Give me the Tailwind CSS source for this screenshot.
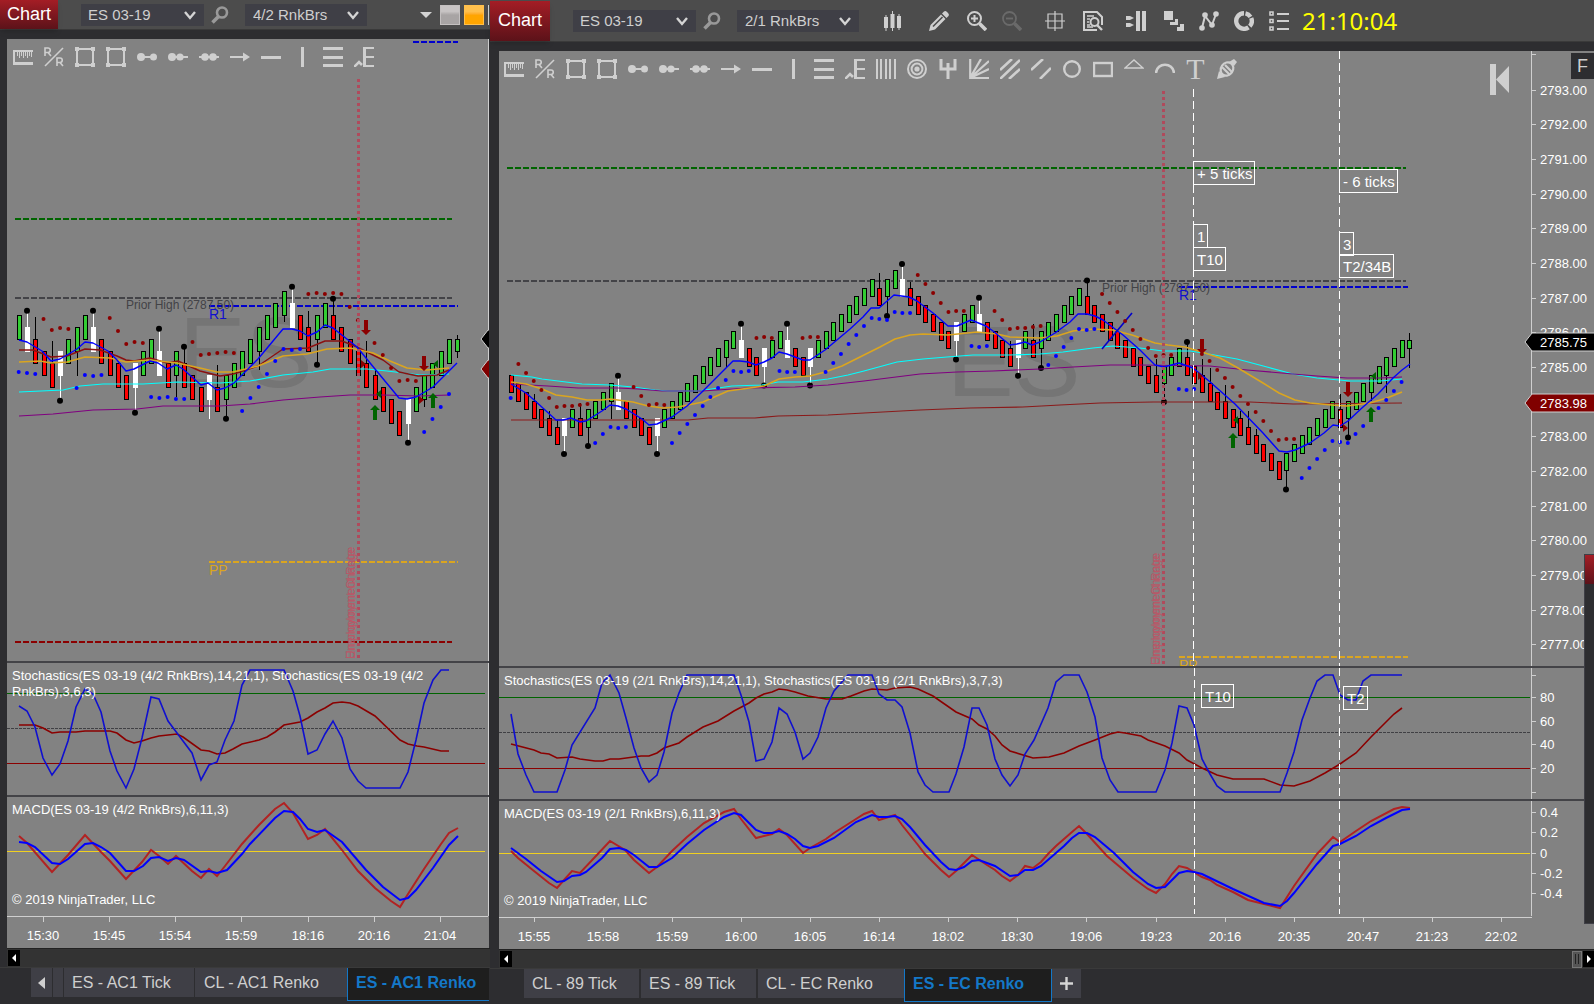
<!DOCTYPE html>
<html lang="en">
<head>
    <meta charset="UTF-8">
    <meta name="viewport" content="width=device-width, initial-scale=1.0">
    <title>ES 03-19 - Chart</title>
    <script src="https://cdn.jsdelivr.net/npm/@tailwindcss/browser@4"></script>
</head>
<body class="flex h-screen overflow-hidden bg-[#2d2d30] font-['Liberation_Sans',Arial,sans-serif] text-[13px] text-white">

    <!-- icon set -->
    <svg class="hidden" aria-hidden="true">
        <symbol id="chevron" viewBox="0 0 12 9"><path d="M1 1l5 6 5-6" fill="none" stroke="#d4d4d4" stroke-width="2.4"/></symbol>
        <symbol id="search" viewBox="0 0 18 18"><g fill="none" stroke="#999"><circle cx="11" cy="6.5" r="5" stroke-width="2.6"/><path d="M7.5 10.5L1.5 16.5" stroke-width="3.6"/></g></symbol>
        <symbol id="ruler" viewBox="0 0 20 20"><path d="M0 3h20v2H2v10h18v3H0z"/><path d="M4.500 5v4M6.500 5v6M8.500 5v4M10.500 5v6M12.500 5v4M14.500 5v6M16.500 5v4M18.500 5v5" stroke="#cfcfcf" stroke-width="1"/></symbol>
        <symbol id="risk" viewBox="0 0 20 20"><g fill="none" stroke="#cfcfcf" stroke-width="1.6"><path d="M1 19L19 1"/><path d="M1 9V1h3a2.2 2.2 0 0 1 0 4.500H1M4 5.500L7 9"/><path d="M13 19v-8h3a2.200 2.200 0 0 1 0 4.500h-3M16 15.500l3 3.500"/></g></symbol>
        <symbol id="region" viewBox="0 0 20 20"><rect x="2" y="2" width="16" height="16" fill="none" stroke="#cfcfcf" stroke-width="2"/><path d="M0 0h4v4H0zM16 0h4v4h-4zM0 16h4v4H0zM16 16h4v4h-4z"/></symbol>
        <symbol id="line" viewBox="0 0 20 20"><path d="M3 9h14v2H3z"/><circle cx="4" cy="10" r="4"/><circle cx="16.500" cy="10" r="3.500"/></symbol>
        <symbol id="ray" viewBox="0 0 20 20"><path d="M3 9h17v2H3z"/><circle cx="4" cy="10" r="4"/><circle cx="12" cy="10" r="3.600"/></symbol>
        <symbol id="extended" viewBox="0 0 20 20"><path d="M0 9h20v2H0z"/><circle cx="6" cy="10" r="3.800"/><circle cx="14" cy="10" r="3.800"/></symbol>
        <symbol id="arrow" viewBox="0 0 20 20"><path d="M0 9h13V5.500l7 4.500-7 4.500V11H0z"/></symbol>
        <symbol id="hline" viewBox="0 0 20 20"><path d="M0 9h20v3H0z"/></symbol>
        <symbol id="vline" viewBox="0 0 20 20"><path d="M9 0h3v20H9z"/></symbol>
        <symbol id="retrace" viewBox="0 0 20 20"><path d="M0 0h20v3H0zM0 9h20v3H0zM0 17h20v3H0z"/></symbol>
        <symbol id="fibext" viewBox="0 0 20 20"><path d="M9 0h11v2h-8v7h8v2h-8v7h8v2H9z"/><path d="M0 20l5-5 3 3" fill="none" stroke="#cfcfcf" stroke-width="2.600"/></symbol>
        <symbol id="timeext" viewBox="0 0 20 20"><path d="M0 0h2v20H0zM4 0h2v20H4zM9 0h2v20H9zM13 0h2v20h-2zM18 0h2v20h-2z"/></symbol>
        <symbol id="target" viewBox="0 0 20 20"><g fill="none" stroke="#cfcfcf" stroke-width="2"><circle cx="10" cy="10" r="9"/><circle cx="10" cy="10" r="5.400"/></g><circle cx="10" cy="10" r="2.600"/></symbol>
        <symbol id="fork" viewBox="0 0 20 20"><path d="M3 0v10h14V0M10 4v16" fill="none" stroke="#cfcfcf" stroke-width="3"/></symbol>
        <symbol id="fan" viewBox="0 0 20 20"><path d="M1.200 0v19H20M1 19L12 0M1 19L20 2M1 19L20 10" fill="none" stroke="#cfcfcf" stroke-width="2.200"/></symbol>
        <symbol id="channel" viewBox="0 0 20 20"><path d="M0 11L12 0M0 20L20 1M9 20l11-10" fill="none" stroke="#cfcfcf" stroke-width="2.600"/></symbol>
        <symbol id="regression" viewBox="0 0 20 20"><path d="M0 11L12 0M9 20L20 9" fill="none" stroke="#cfcfcf" stroke-width="2.600"/></symbol>
        <symbol id="ellipse" viewBox="0 0 20 20"><circle cx="10" cy="10" r="7.800" fill="none" stroke="#cfcfcf" stroke-width="2.400"/></symbol>
        <symbol id="rect" viewBox="0 0 20 20"><rect x="1" y="4" width="18" height="13" fill="none" stroke="#cfcfcf" stroke-width="2.400"/></symbol>
        <symbol id="triangle" viewBox="0 0 20 20"><path d="M1 9l9-8 9 8z" fill="none" stroke="#cfcfcf" stroke-width="1.400"/></symbol>
        <symbol id="arc" viewBox="0 0 20 20"><path d="M1 14c1-11 17-11 18 0" fill="none" stroke="#cfcfcf" stroke-width="2.600"/></symbol>
        <symbol id="marker" viewBox="0 0 20 20"><path d="M0 20l2-8 6 6z"/><path d="M12 3l5-3 3 3-3 4z"/><g fill="none" stroke="#cfcfcf" stroke-width="2.200"><ellipse cx="10" cy="10" rx="6" ry="7" transform="rotate(35 10 10)"/><path d="M5 8l8 8M8 6l7 7"/></g></symbol>
        <symbol id="bars" viewBox="0 0 20 20"><path d="M1 6h4v11H1zM7.500 3h4v14h-4zM14 5h4v12h-4zM2.500 4h1v16h-1zM9 0h1v20H9zM15.500 3h1v16h-1z"/></symbol>
        <symbol id="pencil" viewBox="0 0 20 20"><path d="M0 20l1.500-6L12 3.500l4.500 4.500L6 18.500zM13 2.500L15 .5q1.500-1 3 .5l1 1q1.500 1.500.5 3l-2 2z"/><path d="M4 15.500L13.500 6" stroke="#4c4c4c" stroke-width="1.600"/></symbol>
        <symbol id="zoomin" viewBox="0 0 20 20"><g fill="none" stroke="#cfcfcf" stroke-width="2"><circle cx="7.500" cy="7.500" r="6.500"/><path d="M7.500 4v7M4 7.500h7"/><path d="M12.500 12.500l6.500 6.500" stroke-width="3.600"/></g></symbol>
        <symbol id="zoomout" viewBox="0 0 20 20"><g fill="none" stroke="#6a6a6a" stroke-width="1.800"><circle cx="7.500" cy="7.500" r="6.500"/><path d="M4 7.500h7"/><path d="M12.500 12.500l6.500 6.500" stroke-width="3.600"/></g></symbol>
        <symbol id="crosshair" viewBox="0 0 20 20"><path d="M3 3h14v14H3zM10 0v20M0 10h20" fill="none" stroke="#cfcfcf" stroke-width="1.200"/></symbol>
        <symbol id="databox" viewBox="0 0 20 20"><path d="M19 14V6l-5-5H1v18h13" fill="none" stroke="#cfcfcf" stroke-width="2"/><path d="M4 5h7M4 8h3M4 11h2M4 14h3M4 16h6" stroke="#cfcfcf" stroke-width="1.500"/><circle cx="11.500" cy="11" r="4" fill="none" stroke="#cfcfcf" stroke-width="2"/><path d="M14 14l5 5" stroke="#cfcfcf" stroke-width="2.400"/></symbol>
        <symbol id="trader" viewBox="0 0 20 20"><path d="M0 5h4l4 2-4 2H0zM0 12h4l4 2-4 2H0zM10 0h4v20h-4zM16 0h4v20h-4z"/></symbol>
        <symbol id="strategy" viewBox="0 0 20 20"><path d="M0 0h9v9H0zM6 11h5V8h3v6H6zM13 16h3v-3h4v7h-7z"/></symbol>
        <symbol id="indicator" viewBox="0 0 20 20"><path d="M3 17L6 5l7 9 4-11" fill="none" stroke="#cfcfcf" stroke-width="2"/><circle cx="3" cy="17" r="2.800"/><circle cx="6" cy="4" r="2.800"/><circle cx="13" cy="14" r="2.800"/><circle cx="17" cy="3" r="2.800"/></symbol>
        <symbol id="ring" viewBox="0 0 20 20"><g fill="none" stroke="#cfcfcf" stroke-width="4.400"><path d="M10 2.200A7.800 7.800 0 1 0 14.500 16.400"/><path d="M11.500 2.300A7.800 7.800 0 0 1 16.500 5.800"/><path d="M17.200 7A7.800 7.800 0 0 1 15.800 15.200"/></g></symbol>
        <symbol id="props" viewBox="0 0 20 20"><path d="M1 1h3v3H1zM1 8.500h3v3H1zM1 16h3v3H1z" fill="none" stroke="#cfcfcf" stroke-width="1.600"/><path d="M8 2h12v2H8zM8 9h12v2H8zM8 17h12v2H8z"/></symbol>
    </svg>

    <!-- 4/2 window -->
    <section class="flex w-[490px] shrink-0 flex-col">
        <header class="flex h-[30px] items-center border-b border-[#3a3a3a] bg-[#4c4c4c] text-[#cfcfcf]">
            <h1 class="flex h-[29px] w-[58px] items-center justify-center bg-linear-to-b from-[#a41d25] to-[#5c1219] text-[18px] text-white shadow-md">Chart</h1>
            <div class="relative ml-[23px]">
                <select aria-label="Instrument" class="block h-[22px] w-[123px] appearance-none bg-[#3f3f46] pb-px pl-[7px] text-[15px]"><option>ES 03-19</option></select>
                <svg class="pointer-events-none absolute top-[7px] right-2 h-[9px] w-3"><use href="#chevron"/></svg>
            </div>
            <button aria-label="Search" class="ml-[7px]"><svg class="size-[18px]"><use href="#search"/></svg></button>
            <div class="relative ml-4">
                <select aria-label="Interval" class="block h-[22px] w-[122px] appearance-none bg-[#3f3f46] pb-px pl-2 text-[15px]"><option>4/2 RnkBrs</option></select>
                <svg class="pointer-events-none absolute top-[7px] right-2 h-[9px] w-3"><use href="#chevron"/></svg>
            </div>
            <button aria-label="Link menu" class="ml-auto"><svg class="h-[6px] w-3" viewBox="0 0 12 6"><path d="M0 0h12L6 6z" fill="#d4d4d4"/></svg></button>
            <button aria-label="Instrument link" class="ml-2 size-5 border border-[#c4c0c0] bg-linear-to-b from-[#c8c4c4] from-30% to-[#a8a4a4] to-50%"></button>
            <button aria-label="Interval link" class="mr-1 ml-1 size-5 border border-[#ffc04d] bg-linear-to-b from-[#ffc04d] from-30% to-[#ffa500] to-50%"></button>
            <span class="mr-px h-5 w-px bg-[#d4d4d4]"></span>
        </header>

        <div class="mt-[9px] ml-[7px] flex min-h-0 flex-1 flex-col border-r border-[#2d2d30] bg-[#828282]">
            <div class="relative min-h-0 flex-1">
                <svg class="absolute inset-0 size-full"><g id="price-left" transform="translate(-7 -39)"></g></svg>
                <nav aria-label="Drawing tools" class="absolute top-2 left-0 flex" data-tools="12"></nav>
            </div>
            <div class="relative h-[134px] border-t-2 border-[#434347]">
                <svg class="absolute inset-0 size-full">
                    <g transform="translate(-7 -663)" fill="none">
                        <g shape-rendering="crispEdges">
                            <path d="M7 693h478" stroke="#006400"/>
                            <path d="M7 728h478" stroke="#404044" stroke-dasharray="3 1"/>
                            <path d="M7 763h478" stroke="#8b0000"/>
                            <path d="M488 663v134" stroke="#cfcfcf"/>
                        </g>
                        <polyline stroke="#8b0000" stroke-width="1.600" points="19,725 35,725 43,728 52,733 60,732 76,732 85,731 110,731 117,733 126,740 134,743 142,741 151,738 159,736 177,734 183,737 201,750 209,751 217,754 225,753 233,749 242,744 259,740 267,737 275,732 284,725 300,722 308,718 317,712 325,708 333,703 342,702 350,703 358,706 375,716 400,740 408,744 417,746 424,747 441,751 449,751"/>
                        <polyline stroke="#0f0fd0" stroke-width="1.600" points="19,706 27,711 35,727 43,758 52,775 60,764 68,741 76,707 85,689 93,694 101,712 110,751 117,771 126,788 134,769 142,738 151,697 159,699 168,721 177,733 192,753 201,780 209,765 217,762 225,740 234,721 242,685 250,670 284,670 293,691 300,716 308,754 317,750 325,734 333,721 342,738 350,769 358,781 366,788 400,788 408,772 416,740 424,703 433,680 441,670 449,670"/>
                    </g>
                </svg>
                <p class="relative mt-[5px] ml-[5px] w-[450px] leading-4">Stochastics(ES 03-19 (4/2 RnkBrs),14,21,1), Stochastics(ES 03-19 (4/2 RnkBrs),3,6,3)</p>
            </div>
            <div class="relative flex h-[121px] flex-col justify-between border-t-2 border-[#434347] pt-[5px] pb-2 pl-[5px]">
                <svg class="absolute inset-0 size-full">
                    <g transform="translate(-7 -797)" fill="none">
                        <g shape-rendering="crispEdges">
                            <path d="M7 851h478" stroke="#f0d020"/>
                            <path d="M488 797v120" stroke="#cfcfcf"/>
                        </g>
                        <polyline stroke="#b22222" stroke-width="2" points="19,836 27,843 52,872 68,855 85,835 101,852 110,861 126,879 142,862 151,850 159,856 168,864 176,856 192,871 201,878 209,869 217,876 225,866 242,844 259,825 275,809 284,803 293,813 308,839 317,835 325,829 342,850 358,871 375,888 391,901 400,907 408,894 424,869 441,844 449,833 458,828"/>
                        <polyline stroke="#0000ff" stroke-width="2" points="19,842 27,843 35,847 52,863 60,864 68,859 85,844 93,843 101,847 110,853 126,871 134,871 143,866 151,858 159,857 168,861 176,858 184,860 201,872 209,871 217,873 227,870 242,854 250,844 275,818 284,811 293,812 300,819 308,829 317,832 325,830 342,842 366,870 383,887 400,900 408,898 416,890 433,868 449,845 458,836"/>
                    </g>
                </svg>
                <p class="relative leading-4">MACD(ES 03-19 (4/2 RnkBrs),6,11,3)</p>
                <p class="relative leading-4">© 2019 NinjaTrader, LLC</p>
            </div>
            <div class="relative mr-px h-8 border-t border-[#cfcfcf]">
                <svg class="absolute inset-0 size-full"><g id="time-left" transform="translate(-7 -917)"></g></svg>
            </div>
        </div>
        <div class="ml-[7px] flex h-[19px] items-center border-t border-[#222] bg-[#333] pl-px">
            <button aria-label="Scroll left" class="flex h-4 w-3 items-center justify-center bg-black"><svg class="h-2 w-1" viewBox="0 0 4 8"><path d="M4 0v8L0 4z" fill="#fff"/></svg></button>
        </div>
        <nav aria-label="Left tabs" class="flex h-[37px] items-start border-t border-[#3a3a3a] pl-[31px] text-[16px] text-[#cfcfcf]">
            <button aria-label="Previous tab" class="flex h-[29px] w-[22px] items-center justify-center border-r border-[#2d2d30] bg-[#3f3f46]"><svg class="h-3 w-[7px]" viewBox="0 0 7 12"><path d="M7 0v12L0 6z" fill="#cfcfcf"/></svg></button>
            <span class="h-[29px] w-[10px] bg-[#3f3f46]"></span>
            <a href="#" class="h-[29px] w-[132px] border-x border-[#2d2d30] bg-[#3f3f46] pl-2 leading-[29px]">ES - AC1 Tick</a>
            <a href="#" class="h-[29px] w-[152px] bg-[#3f3f46] pl-[9px] leading-[29px]">CL - AC1 Renko</a>
            <a href="#" class="mr-px h-[33px] flex-1 border-b border-l border-[#1478c8] bg-[#1e1e1e] pl-2 leading-[29px] font-bold text-[#1478c8]">ES - AC1 Renko</a>
        </nav>
    </section>

    <!-- 2/1 window -->
    <section class="relative flex min-w-0 flex-1 flex-col">
        <header class="flex h-[42px] items-center border-b border-[#3a3a3a] bg-[#4c4c4c] text-[#cfcfcf]">
            <h1 class="flex h-[40px] w-[60px] items-center justify-center bg-linear-to-b from-[#a41d25] to-[#5c1219] text-[18px] text-white shadow-md">Chart</h1>
            <div class="relative ml-[23px]">
                <select aria-label="Instrument" class="block h-[22px] w-[123px] appearance-none bg-[#3f3f46] pb-px pl-[7px] text-[15px]"><option>ES 03-19</option></select>
                <svg class="pointer-events-none absolute top-[7px] right-2 h-[9px] w-3"><use href="#chevron"/></svg>
            </div>
            <button aria-label="Search" class="ml-[7px]"><svg class="size-[18px]"><use href="#search"/></svg></button>
            <div class="relative ml-4">
                <select aria-label="Interval" class="block h-[22px] w-[122px] appearance-none bg-[#3f3f46] pb-px pl-2 text-[15px]"><option>2/1 RnkBrs</option></select>
                <svg class="pointer-events-none absolute top-[7px] right-2 h-[9px] w-3"><use href="#chevron"/></svg>
            </div>
            <div class="flex fill-[#cfcfcf]">
                <button aria-label="Bar type" class="ml-6"><svg class="size-5"><use href="#bars"/></svg></button>
                <button aria-label="Draw" class="ml-[26px]"><svg class="size-5"><use href="#pencil"/></svg></button>
                <button aria-label="Zoom in" class="ml-[18px]"><svg class="size-5"><use href="#zoomin"/></svg></button>
                <button aria-label="Zoom out" class="ml-[15px]"><svg class="size-5"><use href="#zoomout"/></svg></button>
                <button aria-label="Crosshair" class="ml-[23px]"><svg class="size-5"><use href="#crosshair"/></svg></button>
                <button aria-label="Data box" class="ml-[18px]"><svg class="size-5"><use href="#databox"/></svg></button>
                <button aria-label="Chart trader" class="ml-[23px]"><svg class="size-5"><use href="#trader"/></svg></button>
                <button aria-label="Data series" class="ml-[18px]"><svg class="size-5"><use href="#strategy"/></svg></button>
                <button aria-label="Indicators" class="ml-[15px]"><svg class="size-5"><use href="#indicator"/></svg></button>
                <button aria-label="Strategies" class="ml-[15px]"><svg class="size-5"><use href="#ring"/></svg></button>
                <button aria-label="Properties" class="ml-[15px]"><svg class="size-5"><use href="#props"/></svg></button>
            </div>
            <time class="ml-[13px] font-['Noto_Sans',sans-serif] text-2xl text-[#ffff00]">21:10:04</time>
        </header>

        <div class="mt-[9px] ml-[9px] flex min-h-0 flex-1 flex-col bg-[#828282]">
            <div class="relative min-h-0 flex-1">
                <svg class="absolute inset-0 size-full"><g id="price-right" transform="translate(-499 -51)"></g></svg>
                <nav aria-label="Drawing tools" class="absolute top-2 -left-px flex" data-tools="24"></nav>
                <button aria-label="Go to last bar" class="absolute top-[13px] right-[85px]"><svg class="h-[31px] w-[19px]" viewBox="0 0 19 31"><path d="M0 0h6v31H0zM19 2v27L6 15.500z" fill="#cfcfcf"/></svg></button>
                <button class="absolute top-[2px] right-0 h-[26px] w-[23px] bg-[#2d2d30] text-[18px] leading-[26px] text-[#cfcfcf]">F</button>
            </div>
            <div class="relative h-[133px] border-t-2 border-[#434347]">
                <svg class="absolute inset-0 size-full">
                    <g transform="translate(-499 -668)" fill="none">
                        <g shape-rendering="crispEdges">
                            <path d="M499 697h1031" stroke="#006400"/>
                            <path d="M499 732h1031" stroke="#404044" stroke-dasharray="3 1"/>
                            <path d="M499 768h1031" stroke="#8b0000"/>
                        </g>
                        <polyline stroke="#8b0000" stroke-width="1.600" points="511,744 534,750 541,753 549,754 557,758 572,757 580,759 595,761 603,761 610,759 619,759 641,756 649,756 657,753 664,748 679,743 687,737 703,727 718,721 734,711 749,703 756,698 764,694 772,692 779,689 787,690 795,692 808,696 826,699 842,699 851,696 864,691 872,689 887,690 895,688 910,687 918,689 933,696 956,712 972,719 979,725 987,729 995,736 1002,745 1010,751 1033,758 1049,757 1064,753 1079,746 1095,740 1110,734 1118,732 1125,733 1141,736 1148,740 1165,746 1179,753 1187,760 1202,768 1217,775 1233,779 1264,779 1280,785 1294,786 1310,781 1325,773 1340,764 1356,753 1371,737 1394,714 1402,708"/>
                        <polyline stroke="#0f0fd0" stroke-width="1.600" points="511,714 518,754 526,775 534,792 557,792 565,770 572,745 595,708 602,683 610,675 619,693 626,718 634,748 641,768 649,782 657,775 664,752 672,713 679,693 687,675 734,675 741,695 749,722 756,761 764,759 772,742 779,708 787,714 795,732 803,759 810,753 818,737 826,708 834,691 848,675 872,675 879,694 887,700 895,700 902,707 910,733 918,772 925,785 933,792 949,792 956,774 964,747 972,708 979,708 987,725 995,759 1002,775 1010,786 1018,775 1025,754 1034,740 1048,708 1056,682 1064,675 1079,675 1087,692 1095,717 1102,758 1110,780 1118,792 1156,792 1165,770 1172,743 1179,706 1187,708 1194,725 1202,759 1210,774 1217,786 1225,792 1280,792 1287,773 1294,752 1302,720 1310,698 1317,681 1325,675 1333,675 1340,695 1348,700 1356,700 1363,681 1371,675 1402,675"/>
                        <g id="stoch-marks"></g>
                    </g>
                </svg>
                <p class="relative mt-[5px] ml-[5px] leading-4">Stochastics(ES 03-19 (2/1 RnkBrs),14,21,1), Stochastics(ES 03-19 (2/1 RnkBrs),3,7,3)</p>
            </div>
            <div class="relative flex h-[117px] flex-col justify-between border-t-2 border-[#434347] pt-[5px] pb-[7px] pl-[5px]">
                <svg class="absolute inset-0 size-full">
                    <g transform="translate(-499 -801)" fill="none">
                        <path d="M499 853h1031" stroke="#f0d020" shape-rendering="crispEdges"/>
                        <polyline stroke="#b22222" stroke-width="2" points="511,851 518,858 534,871 549,883 557,888 564,880 572,871 580,873 595,857 610,841 625,850 634,860 649,873 657,867 672,851 687,837 704,823 724,812 734,809 741,819 756,838 772,834 779,829 787,835 803,853 810,848 826,839 834,833 856,819 864,814 872,811 879,820 895,815 902,825 918,845 925,854 941,870 949,877 956,871 972,855 987,865 995,870 1002,876 1010,881 1018,875 1025,866 1033,868 1041,862 1048,854 1056,846 1072,832 1079,826 1087,834 1107,856 1133,878 1148,889 1156,893 1165,884 1172,874 1179,866 1187,868 1202,877 1210,880 1217,885 1233,892 1248,900 1280,908 1294,886 1317,854 1333,837 1340,842 1356,831 1371,821 1394,809 1402,807 1410,808"/>
                        <polyline stroke="#0000ff" stroke-width="2" points="511,848 526,859 541,871 557,882 564,881 572,876 580,875 586,872 602,858 610,849 619,848 626,850 634,855 649,867 657,867 672,858 687,844 704,830 724,817 734,813 741,815 756,830 764,833 772,833 779,831 787,834 795,839 803,846 810,848 818,846 834,838 856,822 872,815 879,817 887,817 895,816 902,819 910,827 925,845 941,862 949,869 956,870 964,867 972,861 979,860 995,866 1010,876 1018,875 1025,870 1033,870 1041,866 1064,846 1072,838 1079,833 1087,833 1095,837 1114,853 1133,872 1148,884 1156,888 1165,887 1179,873 1187,871 1194,872 1202,874 1233,889 1264,903 1280,906 1287,901 1294,893 1317,864 1333,846 1340,844 1356,836 1371,826 1386,818 1402,810 1410,809"/>
                        <g id="macd-marks"></g>
                    </g>
                </svg>
                <p class="relative leading-4">MACD(ES 03-19 (2/1 RnkBrs),6,11,3)</p>
                <p class="relative leading-4">© 2019 NinjaTrader, LLC</p>
            </div>
            <div class="relative h-[33px]">
                <svg class="absolute inset-0 size-full"><g id="time-right" transform="translate(-499 -916)"><path d="M499 917h1033" stroke="#cfcfcf" shape-rendering="crispEdges"/></g></svg>
            </div>
        </div>
        <div class="ml-[9px] flex h-[19px] items-center border-t border-[#222] bg-[#333] pl-px">
            <button aria-label="Scroll left" class="flex h-4 w-3 items-center justify-center bg-black"><svg class="h-2 w-1" viewBox="0 0 4 8"><path d="M4 0v8L0 4z" fill="#fff"/></svg></button>
            <span class="ml-auto flex h-[17px] w-[10px] items-center justify-center border border-[#777] bg-[#555]"><span class="h-[10px] w-1 border-x border-[#222]"></span></span>
            <button aria-label="Scroll right" class="ml-px flex h-4 w-[11px] items-center justify-center bg-black"><svg class="h-2 w-1" viewBox="0 0 4 8"><path d="M0 0v8l4-4z" fill="#fff"/></svg></button>
        </div>
        <nav aria-label="Right tabs" class="flex h-9 items-start border-t border-[#3a3a3a] pl-[34px] text-[16px] text-[#cfcfcf]">
            <a href="#" class="h-[29px] w-[117px] border-r-2 border-[#2d2d30] bg-[#3f3f46] pl-2 leading-[29px]">CL - 89 Tick</a>
            <a href="#" class="h-[29px] w-[117px] border-r-2 border-[#2d2d30] bg-[#3f3f46] pl-2 leading-[29px]">ES - 89 Tick</a>
            <a href="#" class="h-[29px] w-[146px] bg-[#3f3f46] pl-2 leading-[29px]">CL - EC Renko</a>
            <a href="#" class="h-[33px] w-[148px] border-x border-b border-[#1478c8] bg-[#1e1e1e] pl-2 leading-[29px] font-bold text-[#1478c8]">ES - EC Renko</a>
            <button aria-label="Add tab" class="flex h-[29px] w-[29px] items-center justify-center bg-[#3f3f46]"><svg class="size-[13px]" viewBox="0 0 13 13"><path d="M6.500 0v13M0 6.500h13" stroke="#d4d4d4" stroke-width="2.400"/></svg></button>
        </nav>

        <!-- edge of the window stacked on top -->
        <aside class="absolute top-[554px] right-0 h-[370px] w-[10px] border border-r-0 border-[#3f3f46] bg-[#2d2d30]">
            <div class="h-[29px] bg-linear-to-b from-[#a41d25] to-[#5c1219]"></div>
        </aside>
    </section>

    <script>
        const NS = 'http://www.w3.org/2000/svg';
        const $ = id => document.getElementById(id);

        function add(parent, tag, attrs, text) {
            const el = document.createElementNS(NS, tag);
            for (const k in attrs) el.setAttribute(k, attrs[k]);
            if (text) el.textContent = text;
            parent.appendChild(el);
            return el;
        }

        function label(g, x, y, text, fill, size) {
            add(g, 'text', { x, y, fill: fill || '#fff', 'font-size': size || 13, stroke: 'none' }, text);
        }

        function dashed(g, x1, x2, y, color) {
            add(g, 'path', { d: `M${x1} ${y}H${x2}`, stroke: color, 'stroke-width': 2, 'stroke-dasharray': '6 2' });
        }

        function average(g, color, width, points) {
            add(g, 'polyline', { points, fill: 'none', stroke: color, 'stroke-width': width, 'stroke-linejoin': 'round' });
        }

        // bar: colour, level of the body's top, ^ upper wick, v lower wick, * swing point, | half bar
        function candles(g, o, data) {
            const y = n => o.y + n * o.tick;
            data.trim().split(/\s+/).forEach((bar, i) => {
                const m = bar.match(/^([grw])(-?\d+)(?:\^(-?[\d.]+))?(?:v(-?[\d.]+))?(\*)?(\|)?$/);
                const x = Math.round(o.x + i * o.step);
                const top = y(+m[2]);
                const height = o.tick * (m[6] ? 1 : 2);
                const ink = m[1] === 'w' ? '#fff' : '#000';
                if (m[3]) add(g, 'path', { d: `M${x} ${top}V${y(+m[3])}`, stroke: ink, 'stroke-width': 1, 'shape-rendering': 'crispEdges' });
                if (m[4]) add(g, 'path', { d: `M${x} ${top + height}V${y(+m[4])}`, stroke: ink, 'stroke-width': 1, 'shape-rendering': 'crispEdges' });
                add(g, 'rect', { x: x - 2, y: top, width: 4, height, fill: { g: '#32cd32', r: '#ff0000', w: '#fff' }[m[1]], stroke: ink, 'shape-rendering': 'crispEdges' });
                if (m[5]) add(g, 'circle', { cx: x, cy: y(+(m[3] || m[4])), r: 3, fill: '#000' });
            });
        }

        // runs of stop dots: first bar, then one third-pixel offset per bar
        function stops(g, o, color, runs) {
            runs.forEach(([first, ...ys]) => ys.forEach((v, k) =>
                add(g, 'circle', { cx: o.x + (first + k) * o.step, cy: o.dotY + v / 3, r: 2, fill: color })));
        }

        function arrow(g, x, y, dir) {
            const d = dir === 'up' ? `M${x} ${y}l5 5h-3v10h-4v-10h-3z` : `M${x} ${y + 15}l-5-5h3v-10h4v10h3z`;
            add(g, 'path', { d, fill: dir === 'up' ? '#006400' : '#8b0000' });
        }

        function entry(g, x, y, dir) {
            add(g, 'path', { d: dir === 'left' ? `M${x} ${y}l5-4v8z` : `M${x} ${y - 4}v8l5-4z`, fill: dir === 'left' ? '#006400' : '#8b0000' });
        }

        function box(g, x, y, w, text) {
            add(g, 'rect', { x, y, width: w, height: 23, fill: 'none', stroke: '#fff', 'shape-rendering': 'crispEdges' });
            label(g, x + 4, y + 18, text, '#fff', 15);
        }

        function news(g, x, y1, y2) {
            add(g, 'path', { d: `M${x} ${y1}V${y2}`, stroke: '#b04a5c', 'stroke-width': 3, 'stroke-dasharray': '3 3' });
            ['Employment Change', 'Unemployment Rate'].forEach(t =>
                add(g, 'text', { transform: `translate(${x - 4} ${y2}) rotate(-90)`, fill: '#b85868', 'font-size': 12 }, t));
        }

        function session(g, x, y1, y2) {
            add(g, 'path', { d: `M${x} ${y1}V${y2}`, stroke: '#fff', 'stroke-dasharray': '8 4', 'shape-rendering': 'crispEdges' });
        }

        function tag(g, x, y, fill, text) {
            add(g, 'path', { d: `M${x} ${y}l7-9h70v18h-70z`, fill, stroke: '#cfcfcf' });
            if (text) label(g, x + 15, y + 5, text);
        }

        function times(g, list, x, step, tickY, textY) {
            list.forEach((t, i) => {
                const cx = Math.round(x + i * step);
                add(g, 'path', { d: `M${cx} ${tickY}v5`, stroke: '#cfcfcf', 'shape-rendering': 'crispEdges' });
                add(g, 'text', { x: cx, y: textY, fill: '#fff', 'font-size': 13, 'text-anchor': 'middle' }, t);
            });
        }

        function scale(g, x, top, bottom, marks) {
            const a = add(g, 'g', { stroke: '#cfcfcf', 'shape-rendering': 'crispEdges' });
            add(a, 'path', { d: `M${x} ${top}V${bottom}` });
            marks.forEach(([y, t]) => {
                add(a, 'path', { d: `M${x} ${y}h5` });
                if (t) label(g, x + 9, y + 5, t);
            });
        }

        // drawing tool strips
        const tools = ['ruler', 'risk', 'region', 'region', 'line', 'ray', 'extended', 'arrow', 'hline', 'vline', 'retrace', 'fibext',
            'timeext', 'target', 'fork', 'fan', 'channel', 'regression', 'ellipse', 'rect', 'triangle', 'arc', 'text', 'marker'];
        const textTool = `<span class="font-['Liberation_Serif',serif] text-[30px] leading-5 text-[#cfcfcf]">T</span>`;
        document.querySelectorAll('[data-tools]').forEach(nav => {
            nav.innerHTML = tools.slice(0, nav.dataset.tools).map(t =>
                `<button aria-label="${t}" class="flex h-5 w-[31px] items-center justify-center">` +
                (t === 'text' ? textTool : `<svg class="size-5 fill-[#cfcfcf]"><use href="#${t}"/></svg>`) +
                '</button>').join('');
        });

        // left chart
        const L = $('price-left'), lo = { x: 18.7, step: 8.275, y: 315.5, tick: 12, dotY: 260 };
        label(L, 179, 387, 'ES', '#757575', 100);
        dashed(L, 413, 458, 42, '#0000cd');
        dashed(L, 15, 452, 219, '#006400');
        dashed(L, 15, 452, 298, '#434347');
        dashed(L, 209, 458, 306, '#0000cd');
        dashed(L, 209, 458, 562, '#daa520');
        dashed(L, 15, 452, 642, '#8b0000');
        label(L, 126, 309, 'Prior High (2787.50)', '#434347', 12);
        label(L, 209, 319, 'R1', '#0f0fd0', 14);
        label(L, 209, 575, 'PP', '#daa520', 14);
        candles(L, lo, `g0 w1^-.4* r2^.1 r3 r4^2.1 w3v7.1* g2 g1v5 g0 w1^-.4* r2 r3 r4 r5 w4v8.1* g3 g2 w3^1.1* r4 g3v6.8
            r4^2.6* r5 r6 w5v8.6 r6^4.1 g5v8.6* g4 g3 g2 g1v4.5 g0 g-1 g-2v.5 w-1^-2.4* r0 r1^-.4 g0v4.1* g-1 r0^-1.4* r1
            r2 r3 r4^2.1 r5^4.5 r6 r7 r8 w7v10.6* g6 g5v7.6 g4 g3 g2 g2^1.6v3.5|`);
        average(L, '#800080', 1.2, '19,416 53,414 93,410 137,409 163,406 220,406 250,404 283,400 320,397 350,395 383,395 420,396 449,395');
        average(L, '#00ffff', 1.2, '19,392 63,390 80,386 103,384 143,384 177,382 220,383 250,381 283,375 313,372 330,369 367,369 387,371 420,375 449,374');
        average(L, '#8b1010', 1.4, '19,350 33,350 51,357 67,356 85,349 100,350 117,356 126,360 134,361 150,358 167,363 178,361 200,371 220,376 233,374 240,372 258,366 283,349 308,348 325,341 342,341 357,347 383,360 399,372 418,376 437,375 449,370');
        average(L, '#daa520', 1.6, '19,362 40,361 51,363 67,362 85,357 110,358 126,362 150,360 177,363 200,368 217,372 233,372 258,366 283,356 307,354 327,349 350,348 373,353 390,361 407,368 427,370 449,368');
        average(L, '#0000ff', 1.4, '19,340 27,342 42,351 51,361 60,359 67,355 77,349 85,342 93,343 108,351 117,360 126,371 134,369 150,361 158,363 167,369 176,365 183,369 201,385 208,383 217,390 225,388 234,383 258,359 283,329 292,329 300,331 308,336 317,332 325,325 333,328 357,347 375,369 399,398 407,399 416,397 423,393 433,387 457,363');
        stops(L, lo, '#8b0000', [[3, 177, 210, 204, 207], [11, 174, 213, 252, 246, 249], [21, 246, 285, 282, 279, 276, 279],
            [35, 102, 99, 102, 99, 102, 141, 181], [43, 249, 285, 324, 363, 360, 363]]);
        stops(L, lo, '#0000ff', [[0, 336, 339, 342], [7, 384, 345, 348, 345], [16, 411, 414, 411, 417, 417],
            [27, 453, 414, 381, 342, 303, 267, 270, 267], [49, 516, 477, 441, 402]]);
        arrow(L, 366, 320, 'down');
        arrow(L, 424, 356, 'down');
        arrow(L, 375, 405, 'up');
        arrow(L, 433, 393, 'up');
        entry(L, 361, 364, 'right');
        entry(L, 376, 394, 'left');
        entry(L, 419, 400, 'right');
        entry(L, 433, 364, 'left');
        news(L, 358.5, 79, 659);
        scale(L, 488, 39, 661, []);
        tag(L, 481, 339, '#000');
        tag(L, 481, 369, '#800000');
        times($('time-left'), ['15:30', '15:45', '15:54', '15:59', '18:16', '20:16', '21:04'], 42.5, 66.3, 917, 940);

        // right chart
        const R = $('price-right'), ro = { x: 510.7, step: 7.68, y: 375, tick: 8.67, dotY: 250 };
        label(R, 947, 396, 'ES', '#757575', 100);
        dashed(R, 507, 1406, 168, '#006400');
        dashed(R, 507, 1406, 281, '#434347');
        dashed(R, 1179, 1408, 287, '#0000cd');
        dashed(R, 1179, 1408, 657, '#daa520');
        label(R, 1102, 292, 'Prior High (2787.50)', '#434347', 12);
        label(R, 1179, 300, 'R1', '#0f0fd0', 14);
        label(R, 1179, 670, 'PP', '#daa520', 14);
        candles(R, ro, `r0 r1 r2 r3^2.2 r4 r5^4.2 r6^5.2 w5v9.1* g4 r5^3.2 g4v8.2* g3 g2 g1v5.1 w2^.1* r3 r4 r5 r6 w5v9.1*
            g4 g3 g2 g1 g0 g-1 g-2 g-3 g-4v-.9 g-5 w-4^-5.9* r-3 r-2 w-3v1.2* g-4 g-5 w-4^-5.9* r-3 r-2 w-3v1.2*
            g-4 g-5 g-6 g-7 g-8 g-9 g-10 g-11v-9 r-10^-11.8 g-11v-6.8* g-12 w-11^-12.8* r-10^-10.7 r-9 r-8 r-7 r-6 r-5 w-6v-1.8* g-7
            g-8 w-7^-8.9* r-6 r-5 r-4 r-3^-3.9 w-4v.1* g-5 r-4^-5.9 g-5v-.8* g-6 g-7 g-8 g-9 g-10 r-9^-10.9* r-8 r-7 r-6 r-5
            r-4 r-3 r-2 r-1 r0^-1.8 g-1v3.1* g-2 g-3 r-2^-3.8* r-1 r0^-1.8 r1^-.8 r2 r3^1.2 r4 r5^4.2 r6^4.2 r7^6.2 r8 r9
            r10 g9v13.2* g8 g7 g6 g5 g4 g3 r4^2.2 g3v7.2* g2 g1v3.1 g0v3 g-1 g-2v2.1 g-3 g-4 g-4^-4.9v-.8|`);
        average(R, '#8b1a1a', 1.2, '511,420 688,420 708,418 755,418 778,416 828,415 864,413 920,410 970,408 1023,407 1060,405 1100,403 1153,402 1250,402 1293,404 1402,403');
        average(R, '#00ffff', 1.2, '511,375 532,377 542,379 582,384 610,385 633,387 655,390 668,391 698,391 718,388 732,386 762,385 778,382 803,382 828,379 848,375 864,371 897,362 923,359 947,357 973,355 1010,355 1040,354 1063,352 1093,348 1113,346 1140,348 1163,351 1190,351 1203,353 1220,356 1237,359 1267,367 1293,374 1317,378 1350,381 1380,381 1402,379');
        average(R, '#800080', 1.2, '511,384 548,386 578,388 618,388 638,389 662,391 702,391 748,388 795,387 828,385 864,381 920,374 957,372 993,371 1040,369 1073,367 1110,365 1140,365 1210,366 1247,370 1293,374 1317,376 1347,378 1380,378 1402,377');
        average(R, '#daa520', 1.6, '511,382 526,384 542,389 556,395 572,397 587,400 602,400 610,399 633,402 648,406 663,408 678,407 688,405 703,402 728,391 764,386 779,379 795,377 810,376 825,372 842,366 864,355 880,347 895,339 910,335 923,334 948,335 977,332 997,334 1010,337 1040,338 1057,336 1073,331 1093,329 1113,330 1132,335 1155,343 1168,345 1185,347 1202,352 1220,358 1238,368 1263,383 1279,393 1295,400 1310,403 1332,405 1347,406 1370,403 1387,398 1402,392');
        average(R, '#0000ff', 1.4, '511,384 526,393 533,399 556,420 563,420 571,418 580,422 586,421 602,411 610,405 618,406 626,409 642,419 649,425 657,424 672,417 687,406 702,392 725,369 733,361 740,361 748,362 756,365 764,362 772,358 779,352 787,354 795,357 803,360 810,360 825,350 850,329 863,317 871,308 879,308 894,295 909,297 917,301 933,313 948,326 957,326 971,320 986,326 993,331 1010,345 1017,344 1025,342 1032,345 1040,342 1055,333 1070,322 1078,314 1087,314 1095,316 1103,320 1123,335 1140,350 1155,365 1164,367 1179,363 1193,368 1209,381 1235,404 1263,433 1279,451 1287,452 1295,450 1310,443 1324,433 1333,425 1340,426 1348,421 1363,407 1378,394 1393,378 1402,370 1410,364');
        average(R, '#0000cd', 1.6, '1102,349 1132,313');
        stops(R, ro, '#8b0000', [[1, 342, 369, 393, 420, 444, 471, 468, 468, 465, 462], [16, 411, 438, 465, 462, 465], [32, 264, 261, 264], [38, 264, 261, 261],
            [53, 75, 102, 129, 159, 186, 183, 183], [63, 183, 210, 237, 234, 234, 231, 228], [77, 132, 159, 186, 213, 240, 267, 294, 318, 315, 315],
            [90, 312, 333, 360, 384, 411, 438, 462, 486, 513, 543, 570, 567, 567]]);
        stops(R, ro, '#0000ff', [[0, 444], [11, 579, 552, 531, 534, 531], [21, 579, 549, 522, 495, 468, 441, 414, 390, 363, 366, 363], [35, 363, 366, 366],
            [41, 366, 339, 312, 282, 255, 228, 204, 207, 210, 186, 189, 189], [60, 288, 291, 288], [70, 345, 318, 291, 264, 237, 240, 237], [87, 417, 420, 417],
            [103, 684, 654, 627, 600, 573, 576, 579, 552, 528, 501, 474, 450, 423, 396]]);
        arrow(R, 1202, 339, 'down');
        arrow(R, 1348, 382, 'down');
        arrow(R, 1233, 433, 'up');
        arrow(R, 1371, 407, 'up');
        entry(R, 1198, 376, 'right');
        entry(R, 1233, 420, 'left');
        entry(R, 1343, 428, 'right');
        entry(R, 1371, 376, 'left');
        news(R, 1163.5, 91, 665);
        session(R, 1193, 89, 666);
        session(R, 1339, 51, 666);
        box(R, 1193, 161, 61, '+ 5 ticks');
        box(R, 1193, 224, 14, '1');
        box(R, 1193, 247, 32, 'T10');
        box(R, 1339, 169, 58, '- 6 ticks');
        box(R, 1339, 232, 14, '3');
        box(R, 1339, 254, 54, 'T2/34B');
        const prices = [[54]];
        for (let p = 2793; p > 2776; p--) prices.push([Math.round(159 + (2791 - p) * 34.67), p + '.00']);
        scale(R, 1531, 51, 666, prices);
        tag(R, 1525, 342, '#000', '2785.75');
        tag(R, 1525, 403, '#800000', '2783.98');

        const S = $('stoch-marks');
        session(S, 1194, 668, 799);
        session(S, 1339, 668, 799);
        box(S, 1201, 684, 32, 'T10');
        box(S, 1343, 686, 24, 'T2');
        scale(S, 1531, 668, 799, [[675], [697, '80'], [721, '60'], [744, '40'], [768, '20'], [792]]);
        const M = $('macd-marks');
        session(M, 1194, 801, 914);
        session(M, 1339, 801, 914);
        scale(M, 1531, 801, 917, [[812, '0.4'], [832, '0.2'], [853, '0'], [873, '-0.2'], [893, '-0.4']]);
        times($('time-right'), ['15:55', '15:58', '15:59', '16:00', '16:05', '16:14', '18:02', '18:30', '19:06', '19:23', '20:16', '20:35', '20:47', '21:23', '22:02'], 533.6, 69.1, 917, 941);
    </script>
</body>
</html>
